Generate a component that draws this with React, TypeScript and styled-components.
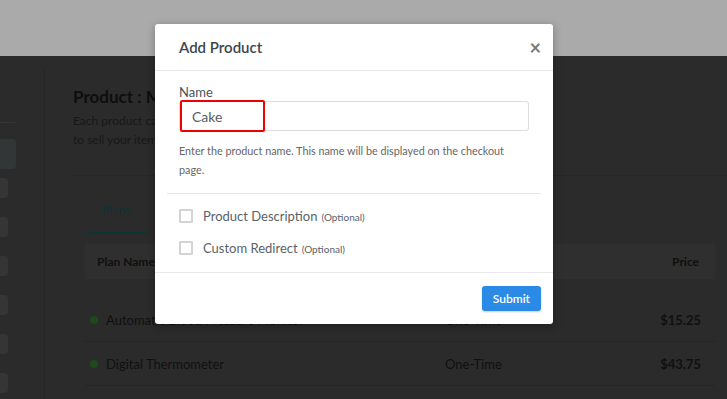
import styled, { createGlobalStyle } from 'styled-components';

const GlobalStyle = createGlobalStyle`
  html, body {
    margin: 0;
    padding: 0;
    background: #2b2b2b;
    font-family: Lato, "Open Sans", Arial, sans-serif;
  }
  #root {
    width: 727px;
    height: 399px;
    overflow: hidden;
    position: relative;
  }
`;

const Page = styled.div`
  display: flex;
  flex-direction: column;
  height: 399px;
`;

const TopBar = styled.div`
  height: 56px;
  background: #aaaaaa;
  flex-shrink: 0;
`;

const Body = styled.div`
  display: flex;
  flex: 1;
`;

const Sidebar = styled.div`
  width: 44px;
  border-right: 1px solid #262626;
  margin-top: 12px;
  display: flex;
  flex-direction: column;
`;

const SideRule = styled.div`
  width: 15px;
  height: 1px;
  background: #363636;
  margin: 54px 0 16px;
`;

const SideItems = styled.div`
  display: flex;
  flex-direction: column;
  gap: 19px;
`;

const SideItem = styled.div<{ $active?: boolean }>`
  width: ${(p) => (p.$active ? '16px' : '8px')};
  height: ${(p) => (p.$active ? '30px' : '20px')};
  background: ${(p) => (p.$active ? '#333636' : '#353535')};
  border-radius: 0 4px 4px 0;
  margin-bottom: ${(p) => (p.$active ? '-10px' : '0')};
`;

const Main = styled.div`
  flex: 1;
  padding: 31px 0 0 28px;
  color: rgb(18, 18, 18);
`;

const PageTitle = styled.h1`
  margin: 0;
  font-size: 17px;
  font-weight: 700;
  line-height: 20px;
  color: rgb(14, 14, 14);
`;

const PageDesc = styled.p`
  margin: 4px 0 0;
  font-size: 12px;
  line-height: 19px;
  color: rgb(24, 24, 24);
`;

const Rule = styled.div`
  height: 1px;
  background: #262626;
  margin-top: 26px;
`;

const Card = styled.div`
  padding: 0 12px 0 12px;
`;

const Tabs = styled.div`
  display: flex;
  margin-top: 24px;
`;

const Tab = styled.div`
  width: 63px;
  padding-bottom: 12px;
  text-align: center;
  font-size: 12px;
  line-height: 20px;
  color: #0d3436;
  border-bottom: 2px solid #0d3436;
`;

const TableHead = styled.div`
  display: flex;
  justify-content: space-between;
  align-items: center;
  height: 35px;
  margin-top: 10px;
  padding: 0 16px 0 12px;
  background: #2f2f2f;
  font-size: 12px;
  font-weight: 700;
  color: rgb(16, 16, 16);
`;

const Row = styled.div`
  display: grid;
  grid-template-columns: 355px 1fr auto;
  align-items: center;
  height: 43px;
  border-bottom: 1px solid #262626;
  padding: 0 14px 0 5px;
  font-size: 13px;
  color: rgb(16, 16, 16);
`;

const FirstRow = styled(Row)`
  margin-top: 19px;
`;

const PlanName = styled.div`
  display: flex;
  align-items: center;
  gap: 8px;
`;

const Dot = styled.span`
  width: 8px;
  height: 8px;
  border-radius: 50%;
  background: #1d4a1d;
`;

const Price = styled.div`
  font-weight: 700;
  font-size: 13px;
`;

const Modal = styled.div`
  position: absolute;
  left: 155px;
  top: 24px;
  width: 398px;
  background: #fff;
  border-radius: 3px;
  box-shadow: 0 2px 8px rgba(0, 0, 0, 0.3);
`;

const ModalHeader = styled.div`
  height: 46px;
  display: flex;
  align-items: center;
  justify-content: space-between;
  padding: 0 12px 0 24px;
  border-bottom: 1px solid #e8e8e8;
`;

const ModalTitle = styled.h2`
  margin: 0;
  font-size: 15px;
  font-weight: 600;
  color: #3c4650;
`;

const Close = styled.span`
  font-size: 20px;
  font-weight: 700;
  color: #7a7a7a;
  line-height: 1;
`;

const ModalBody = styled.div`
  padding: 13px 24px 0;
`;

const Label = styled.div`
  font-size: 13px;
  line-height: 16px;
  color: #4a535b;
`;

const InputWrap = styled.div`
  position: relative;
  margin-top: 1px;
`;

const Input = styled.div`
  height: 28px;
  border: 1px solid #dcdcdc;
  border-radius: 3px;
  display: flex;
  align-items: center;
  padding-left: 12px;
  font-size: 14px;
  color: #555d64;
`;

const Highlight = styled.div`
  position: absolute;
  left: 1px;
  top: -1px;
  width: 81px;
  height: 28px;
  border: 2px solid #f00000;
  border-radius: 2px;
`;

const Help = styled.p`
  margin: 10px 0 0;
  max-width: 335px;
  font-size: 10.8px;
  line-height: 19px;
  color: #666;
`;

const Divider = styled.div`
  height: 1px;
  background: #e6e6e6;
  margin: 14px -12px 0;
`;

const Options = styled.div`
  display: flex;
  flex-direction: column;
  gap: 12px;
  padding: 12px 0 14px;
`;

const Option = styled.label`
  display: flex;
  align-items: center;
  gap: 10px;
  height: 20px;
  font-size: 13px;
  color: #59626a;
`;

const Box = styled.span`
  width: 10px;
  height: 10px;
  border: 2px solid #d4d4d4;
  border-radius: 1px;
`;

const Optional = styled.span`
  font-size: 10px;
  margin-left: 4px;
`;

const ModalFooter = styled.div`
  border-top: 1px solid #e8e8e8;
  display: flex;
  justify-content: flex-end;
  padding: 13px 12px 13px;
`;

const SubmitButton = styled.button`
  height: 25px;
  padding: 0 11px;
  border: none;
  border-radius: 3px;
  background: #2b8ae6;
  color: #fff;
  font-family: inherit;
  font-size: 12px;
  font-weight: 600;
  box-shadow: 0 1px 2px rgba(0, 0, 0, 0.2);
`;

const plans = [
  { name: 'Automatic Blood Pressure Monitor', type: 'One-Time', price: '$15.25' },
  { name: 'Digital Thermometer', type: 'One-Time', price: '$43.75' },
];

export default function App() {
  return (
    <>
      <GlobalStyle />
      <Page>
        <TopBar />
        <Body>
          <Sidebar>
            <SideRule />
            <SideItems>
              <SideItem $active />
              <SideItem />
              <SideItem />
              <SideItem />
              <SideItem />
              <SideItem />
              <SideItem />
            </SideItems>
          </Sidebar>
          <Main>
            <PageTitle>Product : Manage</PageTitle>
            <PageDesc>
              Each product can have multiple plans. Create a plan for each way you want
              <br />
              to sell your items.
            </PageDesc>
            <Rule />
            <Card>
              <Tabs>
                <Tab>Plans</Tab>
              </Tabs>
              <TableHead>
                <span>Plan Name</span>
                <span>Price</span>
              </TableHead>
              {plans.map((p, i) => {
                const R = i === 0 ? FirstRow : Row;
                return (
                  <R key={p.name}>
                    <PlanName>
                      <Dot />
                      {p.name}
                    </PlanName>
                    <span>{p.type}</span>
                    <Price>{p.price}</Price>
                  </R>
                );
              })}
            </Card>
          </Main>
        </Body>
      </Page>
      <Modal>
        <ModalHeader>
          <ModalTitle>Add Product</ModalTitle>
          <Close>×</Close>
        </ModalHeader>
        <ModalBody>
          <Label>Name</Label>
          <InputWrap>
            <Input>Cake</Input>
            <Highlight />
          </InputWrap>
          <Help>Enter the product name. This name will be displayed on the checkout page.</Help>
          <Divider />
          <Options>
            <Option>
              <Box />
              <span>
                Product Description<Optional>(Optional)</Optional>
              </span>
            </Option>
            <Option>
              <Box />
              <span>
                Custom Redirect<Optional>(Optional)</Optional>
              </span>
            </Option>
          </Options>
        </ModalBody>
        <ModalFooter>
          <SubmitButton>Submit</SubmitButton>
        </ModalFooter>
      </Modal>
    </>
  );
}
